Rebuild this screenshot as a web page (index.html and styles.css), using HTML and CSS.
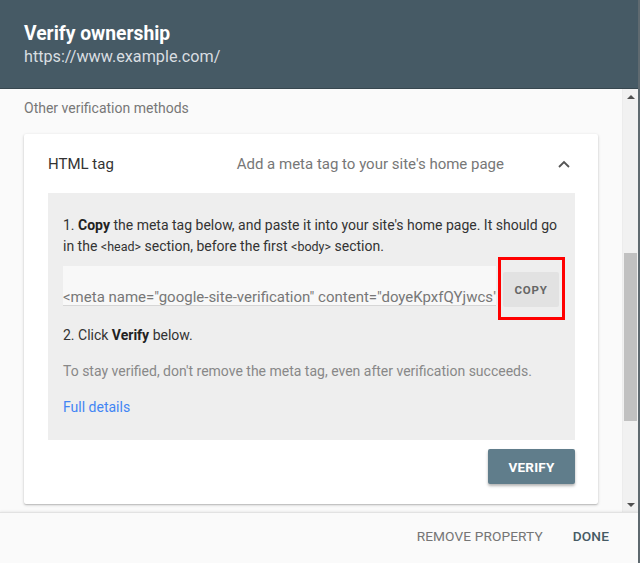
FILE: index.html
```html
<!DOCTYPE html>
<html>
<head>
<meta charset="utf-8">
<link rel="stylesheet" href="styles.css">
</head>
<body>
<div class="dialog">
  <header class="top">
    <h1 class="title">Verify ownership</h1>
    <div class="url">https://www.example.com/</div>
  </header>
  <div class="main">
    <div class="content">
      <div class="section-label">Other verification methods</div>
      <div class="card">
        <div class="card-head">
          <span class="method">HTML tag</span>
          <span class="method-desc">Add a meta tag to your site's home page</span>
          <svg class="chev" width="14" height="10" viewBox="0 0 14 10"><path d="M2 8 L7 3 L12 8" fill="none" stroke="#555" stroke-width="1.8"/></svg>
        </div>
        <div class="panel">
          <p class="step">1. <b>Copy</b> the meta tag below, and paste it into your site's home page. It should go in the <code>&lt;head&gt;</code> section, before the first <code>&lt;body&gt;</code> section.</p>
          <div class="copy-row">
            <div class="meta-field"><span class="meta-text">&lt;meta name="google-site-verification" content="doyeKpxfQYjwcs" /&gt;</span></div>
            <button class="copy-btn">COPY</button>
            <div class="highlight"></div>
          </div>
          <p class="step step2">2. Click <b>Verify</b> below.</p>
          <p class="note">To stay verified, don't remove the meta tag, even after verification succeeds.</p>
          <a class="details">Full details</a>
        </div>
        <div class="card-actions">
          <button class="verify-btn">VERIFY</button>
        </div>
      </div>
    </div>
    <div class="scrollbar">
      <div class="arrow up"></div>
      <div class="track"><div class="thumb"></div></div>
      <div class="arrow down"></div>
    </div>
  </div>
  <footer class="bottom">
    <button class="text-btn remove">REMOVE PROPERTY</button>
    <button class="text-btn done">DONE</button>
  </footer>
</div>
</body>
</html>
```

FILE: styles.css
```css
* { box-sizing: border-box; }
html, body { margin: 0; padding: 0; }
body {
  font-family: Roboto, "Noto Sans", "Liberation Sans", sans-serif;
  background: #fafafa;
  width: 640px;
  height: 563px;
  overflow: hidden;
}
.dialog {
  display: flex;
  flex-direction: column;
  height: 563px;
  border-right: 2px solid #5f6a70;
}
.top {
  height: 89px;
  background: #465a65;
  padding: 22px 24px 0;
  border-bottom: 1px solid #37474f;
}
.title {
  margin: 0;
  font-size: 19.3px;
  font-weight: 700;
  color: #fff;
  line-height: 24px;
}
.url {
  font-size: 16.2px;
  color: #d9dee1;
  line-height: 22px;
  margin-top: 0;
}
.main {
  flex: 1;
  display: flex;
  min-height: 0;
  background: #fafafa;
}
.content {
  flex: 1;
  padding: 9px 24px 0;
  overflow: hidden;
}
.section-label {
  font-size: 14px;
  color: #777;
  line-height: 20px;
}
.card {
  margin-top: 16px;
  width: 574px;
  background: #fff;
  box-shadow: 0 1px 3px rgba(0,0,0,0.22), 0 1px 1px rgba(0,0,0,0.1);
  border-radius: 2px;
  padding-bottom: 20px;
}
.card-head {
  height: 59px;
  display: flex;
  align-items: center;
  padding: 0 24px;
}
.method {
  font-size: 15px;
  color: #333;
}
.method-desc {
  margin-left: auto;
  font-size: 15px;
  color: #777;
}
.chev {
  margin-left: 53px;
  margin-right: 3px;
}
.panel {
  margin: 0 23px 0 24px;
  background: #eeeeee;
  padding: 22px 15px 22px;
}
.step, .note {
  margin: 0;
  font-size: 14px;
  line-height: 21px;
  color: #333;
}
.step code {
  font-family: Roboto, "Noto Sans", sans-serif;
  font-size: 12.5px;
}
.step b { font-weight: 700; color: #222; }
.copy-row {
  position: relative;
  display: flex;
  align-items: flex-start;
  margin-top: 9px;
}
.meta-field {
  width: 433px;
  height: 40px;
  background: #f8f8f8;
  border-bottom: 1px solid #d6d6d6;
  overflow: hidden;
  white-space: nowrap;
  display: flex;
  align-items: flex-end;
  padding-bottom: 0;
}
.meta-text {
  font-size: 15px;
  color: #777;
  line-height: 16px;
}
.copy-btn {
  margin-left: 7px;
  margin-top: 6px;
  width: 56px;
  height: 35px;
  border: none;
  border-radius: 2px;
  background: #e2e2e2;
  color: #666;
  font-family: Roboto, "Noto Sans", sans-serif;
  font-size: 11.5px;
  font-weight: 700;
  letter-spacing: 0.8px;
  padding: 0;
}
.highlight {
  position: absolute;
  left: 435px;
  top: -9px;
  width: 67px;
  height: 63px;
  border: 3px solid #f00;
}
.step2 { margin-top: 18px; }
.note { margin-top: 15px; color: #888; }
.details {
  display: block;
  margin-top: 15px;
  font-size: 14px;
  line-height: 21px;
  color: #4285f4;
}
.card-actions {
  display: flex;
  justify-content: flex-end;
  padding: 9px 23px 0 0;
}
.verify-btn {
  width: 87px;
  height: 35px;
  border: none;
  border-radius: 2px;
  background: #607d8b;
  color: #fff;
  font-family: Roboto, "Noto Sans", sans-serif;
  font-size: 13.5px;
  font-weight: 700;
  letter-spacing: 0.2px;
  box-shadow: 0 2px 3px rgba(0,0,0,0.3);
}
.scrollbar {
  width: 16px;
  background: #f1f1f1;
  display: flex;
  flex-direction: column;
  border-left: 1px solid #ececec;
}
.arrow {
  height: 15px;
  display: flex;
  justify-content: center;
  align-items: center;
}
.arrow.up::before {
  content: "";
  border-left: 4px solid transparent;
  border-right: 4px solid transparent;
  border-bottom: 4px solid #505050;
}
.arrow.down::before {
  content: "";
  border-left: 4px solid transparent;
  border-right: 4px solid transparent;
  border-top: 4px solid #505050;
}
.track {
  flex: 1;
  padding-top: 149px;
}
.thumb {
  margin-left: 1px;
  width: 13px;
  height: 168px;
  background: #c1c1c1;
}
.bottom {
  height: 51px;
  background: #fafafa;
  border-top: 1px solid #e2e2e2;
  box-shadow: 0 -1px 2px rgba(0,0,0,0.06);
  display: flex;
  justify-content: flex-end;
  align-items: center;
  padding-right: 29px;
  padding-bottom: 4px;
  position: relative;
}
.text-btn {
  border: none;
  background: none;
  font-family: Roboto, "Noto Sans", sans-serif;
  font-size: 13.7px;
  padding: 0;
  letter-spacing: 0.1px;
}
.remove { color: #757575; }
.done { color: #455a64; font-weight: 500; margin-left: 30px; }
```
